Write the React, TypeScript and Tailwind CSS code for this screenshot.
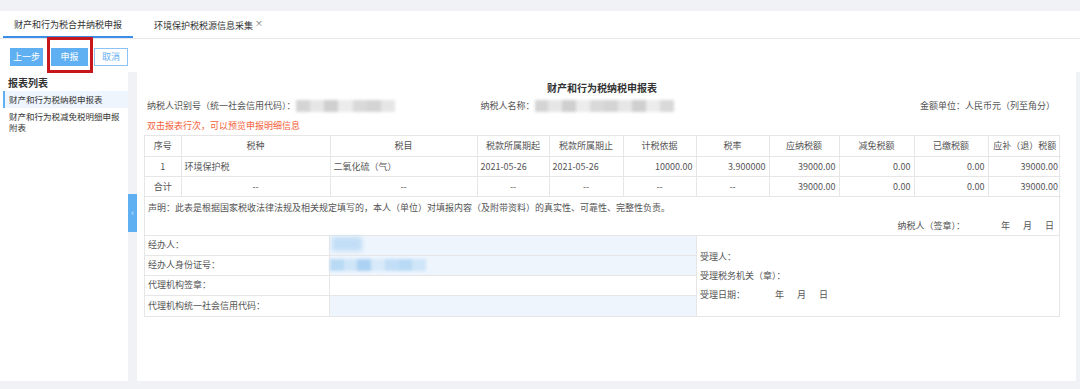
import React from "react";

const font = { fontFamily: '"Noto Sans CJK SC", "Noto Sans", sans-serif' };

const cols = [36, 149, 147, 72, 74, 73, 73, 70, 75, 74, 73];
const heads = ["序号", "税种", "税目", "税款所属期起", "税款所属期止", "计税依据", "税率", "应纳税额", "减免税额", "已缴税额", "应补（退）税额"];

const td = "h-[20px] border border-[#e6e6e6] px-[3px] text-[9px] leading-none text-[#555] whitespace-nowrap";

function Blur({ w, tint = "gray" }: { w: number; tint?: "gray" | "blue" }) {
  const shades =
    tint === "gray"
      ? ["bg-[#d4d4d4]", "bg-[#e6e6e6]", "bg-[#cfcfcf]", "bg-[#ececec]", "bg-[#d9d9d9]"]
      : ["bg-[#b9daf5]", "bg-[#cfe5f8]", "bg-[#acd2f3]", "bg-[#d8eaf9]", "bg-[#c2def6]"];
  const n = Math.max(3, Math.round(w / 14));
  return (
    <span className="inline-flex h-[12px] blur-[1.5px]" style={{ width: w }}>
      {Array.from({ length: n }).map((_, i) => (
        <span key={i} className={`h-full flex-1 ${shades[i % shades.length]}`} />
      ))}
    </span>
  );
}

export default function App() {
  return (
    <div className="h-[389px] w-[1080px] overflow-hidden bg-white" style={font}>
      <div className="h-[11px] bg-[#f0f2f5]" />

      {/* tabs */}
      <div className="flex h-[28px] border-b border-[#e8e8e8] text-[9px] text-[#333]">
        <div className="ml-[3px] flex w-[130px] items-center justify-center border-b-2 border-[#3d8ee8] pt-[2px]">
          财产和行为税合并纳税申报
        </div>
        <div className="ml-[21px] flex items-center pt-[2px]">
          环境保护税税源信息采集
          <span className="-mt-[6px] ml-[2px] text-[8px] text-[#666]">×</span>
        </div>
      </div>

      {/* toolbar */}
      <div className="relative flex h-[33px] items-center gap-[8px] pl-[10px] pt-[2px] text-[9px]">
        <button className="flex h-[18px] w-[33px] items-center justify-center bg-[#5fb0f2] text-white">上一步</button>
        <button className="flex h-[18px] w-[37px] items-center justify-center bg-[#5fb0f2] text-white">申报</button>
        <button className="-ml-[2px] flex h-[18px] w-[34px] items-center justify-center border border-[#8cc3f2] bg-white text-[#5fb0f2]">取消</button>
        <div className="absolute left-[47px] top-[-2px] h-[36px] w-[46px] border-[3px] border-[#c8161d]" />
      </div>

      <div className="flex h-[309px]">
        {/* sidebar */}
        <div className="w-[128px] pl-[3px] pt-[4px] text-[#333]">
          <div className="pl-[5px] text-[10px] font-bold leading-[14px]">报表列表</div>
          <div className="mt-[1px] border-l-2 border-[#5fb0f2] bg-[#eef5fd] py-[3px] pl-[4px] text-[8.5px] leading-[11px]">
            财产和行为税纳税申报表
          </div>
          <div className="py-[3px] pl-[6px] pr-[4px] text-[8.5px] leading-[11px]">
            财产和行为税减免税明细申报附表
          </div>
        </div>

        {/* divider */}
        <div className="relative w-[9px] bg-[#f0f2f5]">
          <div className="absolute left-0 top-[122px] flex h-[38px] w-[9px] items-center justify-center bg-[#5fb0f2] text-[9px] text-[#d6ebfc]">
            ‹
          </div>
        </div>

        {/* main */}
        <div className="flex-1 pl-[7px] pr-[16px] pt-[10px] text-[#555]">
          <div className="text-center text-[10px] font-bold leading-[12px] text-[#333]">财产和行为税纳税申报表</div>
          <div className="mt-[5px] flex h-[14px] items-center pl-[3px] pr-[5px] text-[9px]">
            <span>纳税人识别号（统一社会信用代码）：</span>
            <Blur w={100} />
            <span className="ml-[85px]">纳税人名称：</span>
            <Blur w={139} />
            <span className="ml-auto">金额单位：人民币元（列至角分）</span>
          </div>
          <div className="mt-[7px] pl-[3px] text-[9px] leading-[12px] text-[#f5613a]">双击报表行次，可以预览申报明细信息</div>

          <div className="mt-[3px] w-[916px] border border-[#e6e6e6]">
            <table className="w-full table-fixed border-collapse">
              <colgroup>
                {cols.map((w, i) => (
                  <col key={i} style={{ width: w }} />
                ))}
              </colgroup>
              <tbody>
                <tr>
                  {heads.map((h) => (
                    <td key={h} className={`${td} border-t-0 text-center first:border-l-0 last:border-r-0`}>
                      {h}
                    </td>
                  ))}
                </tr>
                <tr>
                  <td className={`${td} border-l-0 text-center`}>1</td>
                  <td className={td}>环境保护税</td>
                  <td className={td}>二氧化硫（气）</td>
                  <td className={td}>2021-05-26</td>
                  <td className={td}>2021-05-26</td>
                  <td className={`${td} text-right`}>10000.00</td>
                  <td className={`${td} text-right`}>3.900000</td>
                  <td className={`${td} text-right`}>39000.00</td>
                  <td className={`${td} text-right`}>0.00</td>
                  <td className={`${td} text-right`}>0.00</td>
                  <td className={`${td} border-r-0 text-right`}>39000.00</td>
                </tr>
                <tr>
                  <td className={`${td} border-l-0 text-center`}>合计</td>
                  {["--", "--", "--", "--", "--", "--"].map((v, i) => (
                    <td key={i} className={`${td} text-center`}>{v}</td>
                  ))}
                  <td className={`${td} text-right`}>39000.00</td>
                  <td className={`${td} text-right`}>0.00</td>
                  <td className={`${td} text-right`}>0.00</td>
                  <td className={`${td} border-r-0 text-right`}>39000.00</td>
                </tr>
              </tbody>
            </table>

            <div className="h-[39px] border-b border-[#e6e6e6] px-[3px] pt-[5px] text-[9px] leading-[12px]">
              <div>声明：此表是根据国家税收法律法规及相关规定填写的，本人（单位）对填报内容（及附带资料）的真实性、可靠性、完整性负责。</div>
              <div className="mt-[6px] flex justify-end pr-[2px]">
                <span>纳税人（签章）：</span>
                <span className="ml-[36px]">年</span>
                <span className="ml-[13px]">月</span>
                <span className="ml-[13px]">日</span>
              </div>
            </div>

            <div className="flex text-[9px]">
              <div className="w-[551px]">
                {[
                  { l: "经办人：", bg: "bg-[#eef5fd]", v: <span className="ml-[2px] mt-[-2px] inline-block h-[14px] w-[30px] bg-[#c2def6] blur-[2px]" /> },
                  { l: "经办人身份证号：", bg: "bg-[#eef5fd]", v: <Blur w={96} tint="blue" /> },
                  { l: "代理机构签章：", bg: "bg-white", v: null },
                  { l: "代理机构统一社会信用代码：", bg: "bg-[#eef5fd]", v: null },
                ].map((r, i) => (
                  <div key={i} className={`flex h-[20px] ${i < 3 ? "border-b border-[#e6e6e6]" : "h-[19px]"}`}>
                    <div className="flex w-[185px] items-center border-r border-[#e6e6e6] pl-[3px]">{r.l}</div>
                    <div className={`flex flex-1 items-center ${r.bg}`}>{r.v}</div>
                  </div>
                ))}
              </div>
              <div className="flex flex-1 flex-col justify-center gap-[7px] border-l border-[#e6e6e6] pl-[3px] leading-[12px]">
                <div>受理人：</div>
                <div>受理税务机关（章）：</div>
                <div className="flex">
                  <span>受理日期：</span>
                  <span className="ml-[30px]">年</span>
                  <span className="ml-[13px]">月</span>
                  <span className="ml-[13px]">日</span>
                </div>
              </div>
            </div>
          </div>
        </div>

        <div className="w-[4px] bg-[#f0f2f5]" />
      </div>

      <div className="h-[8px] bg-[#f0f2f5]" />
    </div>
  );
}
